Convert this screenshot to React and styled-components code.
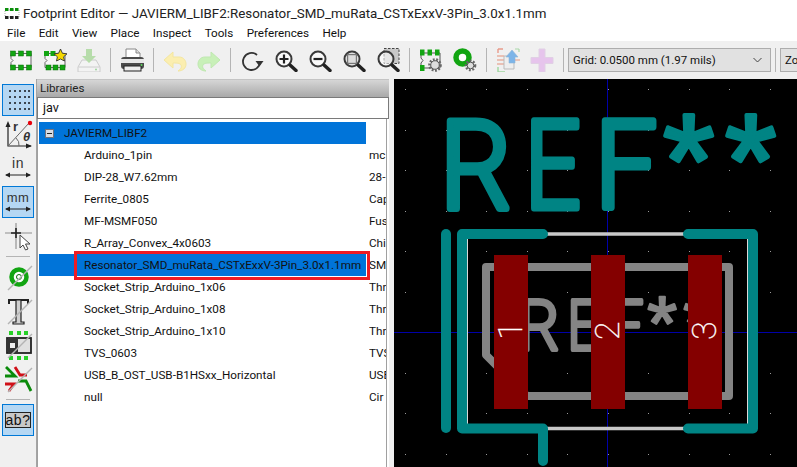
import React from 'react'
import styled, { createGlobalStyle } from 'styled-components'

const Global = createGlobalStyle`
    html, body {
        margin: 0;
        padding: 0;
        background: #fff;
        overflow: hidden;
    }
`
const Window = styled.div`
    width: 797px;
    height: 467px;
    display: flex;
    flex-direction: column;
    overflow: hidden;
    font-family: Roboto, "Noto Sans", sans-serif;
    font-size: 11.7px;
    color: #111;
`
const TitleBar = styled.div`
    height: 24px;
    display: flex;
    align-items: center;
    gap: 3px;
    padding: 2px 0 0 4px;
    box-sizing: border-box;
    font-size: 13.35px;
    color: #222;
    white-space: nowrap;
`
const MenuBar = styled.div`
    height: 17px;
    box-sizing: border-box;
    padding: 1px 0 0 7px;
    display: flex;
    align-items: center;
    gap: 13.4px;
    font-size: 11.7px;
`
const TopToolbar = styled.div`
    height: 38px;
    display: flex;
    align-items: center;
    padding-left: 4px;
    background: #f0f0f0;
    white-space: nowrap;
`
const Slot = styled.div`
    width: 34px;
    height: 26px;
    flex: none;
    display: flex;
    align-items: center;
    justify-content: center;
`
const VSep = styled.div`
    width: 1px;
    height: 24px;
    flex: none;
    margin: 0 4px;
    background: #b4b4b4;
`
const GridSelect = styled.div`
    width: 203px;
    height: 24px;
    flex: none;
    box-sizing: border-box;
    display: flex;
    align-items: center;
    justify-content: space-between;
    padding: 0 8px 0 4px;
    background: #e1e1e1;
    border: 1px solid #adadad;
    font-size: 11.5px;
    overflow: hidden;
`
const Body = styled.div`
    flex: 1;
    display: flex;
    min-height: 0;
`
const SideToolbar = styled.div`
    width: 37px;
    flex: none;
    box-sizing: border-box;
    padding: 5px 0 0 2px;
    display: flex;
    flex-direction: column;
    gap: 2px;
    background: #f0f0f0;
    border-right: 1px solid #a4a4a4;
`
const SideButton = styled.div`
    width: 32px;
    height: 32px;
    box-sizing: border-box;
    display: flex;
    align-items: center;
    justify-content: center;
    background: ${p => (p.$on ? '#b5d7f3' : 'transparent')};
    border: 1px solid ${p => (p.$on ? '#0078d7' : 'transparent')};
`
const HSep = styled.div`
    height: 1px;
    width: 24px;
    margin: 2px 4px 2px;
    background: #b4b4b4;
`
const LibraryPanel = styled.div`
    width: 352px;
    flex: none;
    display: flex;
    flex-direction: column;
`
const PanelHeader = styled.div`
    height: 18px;
    box-sizing: border-box;
    padding: 1px 0 0 3px;
    font-size: 11.6px;
    color: #222;
    background: linear-gradient(#d6d6d6, #a9a9a9);
    border-top: 1px solid #c4c4c4;
`
const FilterInput = styled.div`
    height: 22px;
    box-sizing: border-box;
    padding: 2px 0 0 5px;
    font-size: 12.6px;
    background: #fff;
    border: 1px solid #7a7a7a;
`
const TreeList = styled.div`
    flex: 1;
    box-sizing: border-box;
    margin-right: 2px;
    padding: 3px 0 0 1px;
    background: #fff;
    border-left: 1px solid #a0a0a0;
    border-right: 1px solid #a0a0a0;
`
const TreeRow = styled.div`
    height: 22px;
    display: flex;
    align-items: center;
    position: relative;
    white-space: nowrap;
`
const NameCell = styled.div`
    width: 327px;
    height: 22px;
    flex: none;
    box-sizing: border-box;
    display: flex;
    align-items: center;
    padding-left: ${p => (p.$root ? '6px' : '45px')};
    background: ${p => (p.$blue ? '#0074d9' : 'transparent')};
`
const DescCell = styled.div`
    width: 17px;
    flex: none;
    margin-left: 3px;
    overflow: hidden;
`
const Expander = styled.span`
    width: 9px;
    height: 9px;
    flex: none;
    margin-right: 10px;
    box-sizing: border-box;
    display: flex;
    align-items: center;
    justify-content: center;
    background: #d8dce4;
    border: 1px solid #6d7280;

    &::before {
        content: '';
        width: 5px;
        height: 1px;
        background: #222;
    }
`
const Callout = styled.div`
    position: absolute;
    left: 35px;
    top: -3px;
    width: 296px;
    height: 29px;
    box-sizing: border-box;
    border: 3px solid #ed1c24;
`
const Sash = styled.div`
    width: 5px;
    flex: none;
    background: #f0f0f0;
`
const Canvas = styled.div`
    flex: 1;
    min-width: 0;
    background: #000;
    overflow: hidden;

    svg {
        display: block;
    }
`

const rows = [
    ['Arduino_1pin', 'mc'],
    ['DIP-28_W7.62mm', '28-'],
    ['Ferrite_0805', 'Cap'],
    ['MF-MSMF050', 'Fus'],
    ['R_Array_Convex_4x0603', 'Chi'],
    ['Resonator_SMD_muRata_CSTxExxV-3Pin_3.0x1.1mm', 'SMD', true],
    ['Socket_Strip_Arduino_1x06', 'Thr'],
    ['Socket_Strip_Arduino_1x08', 'Thr'],
    ['Socket_Strip_Arduino_1x10', 'Thr'],
    ['TVS_0603', 'TVS'],
    ['USB_B_OST_USB-B1HSxx_Horizontal', 'USB'],
    ['null', 'Cir'],
]
const menus = ['File', 'Edit', 'View', 'Place', 'Inspect', 'Tools', 'Preferences', 'Help']

const GREEN = '#12a512'
const DARK_GREEN = '#0b6b0b'

// little gear made of a dashed ring
const Gear = ({ x, y, r = 5 }) => (
    <g>
        <circle cx={x} cy={y} r={r} fill="none" stroke="#666" strokeWidth="2.6" strokeDasharray="1.8 1.5" />
        <circle cx={x} cy={y} r={r - 1.2} fill="#ddd" stroke="#555" strokeWidth="1" />
    </g>
)
const Ico = ({ children }) => (
    <svg width="24" height="24" viewBox="0 0 24 24">{children}</svg>
)
const ChipBody = () => (
    <path d="M2 5.5H22V19.5H2V14.5L4 12.5L2 10.5Z" fill="#f6f6f6" stroke="#666" strokeWidth="1" />
)
const ChipIcon = () => (
    <Ico>
        <ChipBody />
        {[1.5, 9.5, 17.5].map(x => <rect key={x} x={x} y="3" width="5" height="5" fill={GREEN} stroke={DARK_GREEN} strokeWidth=".5" />)}
        {[1.5, 9.5, 17.5].map(x => <rect key={x} x={x} y="17" width="5" height="5" fill={GREEN} stroke={DARK_GREEN} strokeWidth=".5" />)}
    </Ico>
)
const ChipStar = () => (
    <Ico>
        <ChipBody />
        {[1, 7.5].map(x => <rect key={x} x={x} y="3" width="5" height="5" fill={GREEN} />)}
        {[3, 10, 17].map(x => <rect key={x} x={x} y="17" width="5" height="5" fill={GREEN} stroke={DARK_GREEN} strokeWidth=".5" />)}
        <path d="M17.5 1L19.4 5.2L24 5.8L20.6 8.8L21.5 13L17.5 11L13.5 13L14.4 8.8L11 5.8L15.6 5.2Z" fill="#f5d800" stroke="#333" strokeWidth=".9" />
    </Ico>
)
const SaveIcon = () => (
    <Ico>
        <path d="M5 12H19L23 19V24H1V19Z" fill="#f3f3f3" stroke="#ccc" />
        <path d="M1.5 19H22.5" stroke="#ccc" />
        <circle cx="19" cy="21.5" r="1" fill="#9ed69e" />
        <path d="M9 1H15V8H19L12 15L5 8H9Z" fill="#b6dcaa" />
    </Ico>
)
const PrinterIcon = () => (
    <Ico>
        <path d="M6 1H16L20 5V10H6Z" fill="#fff" stroke="#888" />
        <path d="M16 1V5H20" fill="#ddd" stroke="#888" />
        <rect x="1" y="9" width="23" height="12" rx="3" fill="#4b4b4b" />
        <rect x="1" y="11" width="23" height="4" fill="#e8e8e8" />
        <rect x="4" y="18" width="17" height="5" fill="#eee" stroke="#222" />
        <circle cx="21.5" cy="17" r="1" fill="#5cd65c" />
    </Ico>
)
const ArrowIcon = ({ fill, edge, flip }) => (
    <Ico>
        <g transform={flip ? 'translate(24 0) scale(-1 1)' : undefined}>
            <path d="M10 4V9H16C21 9 23 13 23 16C23 20 20 23 15 23C18 21 19 19 18 17C17 15.5 15 15 10 15V20L1 12Z" fill={fill} stroke={edge} />
        </g>
    </Ico>
)
const RotateIcon = () => (
    <Ico>
        <path d="M17 7A8.5 8.5 0 1 0 20 13" fill="none" stroke="#333" strokeWidth="1.8" />
        <path d="M15.5 13H23.5L19.5 18.5Z" fill="#333" />
    </Ico>
)
const ZoomGlyph = ({ kind }) => (
    <Ico>
        {kind === 'area' && <rect x="8" y=".5" width="15" height="15" fill="#c8c8c8" stroke="#444" strokeDasharray="2.5 1.5" />}
        <circle cx="10" cy="11" r="7.5" fill={kind === 'area' ? 'rgba(255,255,255,.55)' : '#fafafa'} stroke="#3a3a3a" strokeWidth="2" />
        <path d="M16 17L22 22.5" stroke="#222" strokeWidth="3.4" strokeLinecap="round" />
        {kind === 'in' && <path d="M5.5 11H14.5M10 6.5V15.5" stroke="#222" strokeWidth="2.2" />}
        {kind === 'out' && <path d="M5.5 11H14.5" stroke="#222" strokeWidth="2.2" />}
        {kind === 'fit' && <rect x="5.5" y="6.5" width="9" height="9" fill="#ddd" stroke="#777" strokeWidth="1.4" />}
    </Ico>
)
const ChipGear = () => (
    <Ico>
        <path d="M2 5H21V20H2V15L4 12.5L2 10Z" fill="none" stroke="#555" strokeWidth="1" />
        {[1, 8.5, 16].map(x => <rect key={x} x={x} y="1.5" width="4.5" height="6" fill={GREEN} />)}
        <rect x="1" y="17" width="4.5" height="6" fill={GREEN} />
        <Gear x={16} y={17} r={5.5} />
    </Ico>
)
const ViaGear = () => (
    <Ico>
        <circle cx="9.5" cy="9.5" r="6.5" fill="#fff" stroke={GREEN} strokeWidth="5.5" />
        <Gear x={17.5} y={17.5} r={4.5} />
    </Ico>
)
const ImportIcon = () => (
    <Ico>
        <path d="M1 8H8M1 12H8M1 16H8" stroke="#e8b0a0" strokeWidth="1.4" />
        <path d="M2 1H7M2 1V5" stroke="#e89a8a" strokeWidth="1.4" fill="none" />
        <path d="M2 19V24H9" stroke="#9fd69f" strokeWidth="1.4" fill="none" />
        <path d="M19 1H23M23 1V4" stroke="#aad8aa" strokeWidth="1.2" fill="none" />
        <path d="M19 12H24" stroke="#e8b0a0" strokeWidth="1.4" />
        <path d="M8 8H13L18 12V21H8Z" fill="#eee" stroke="#bbb" />
        <path d="M10 9L16 2L22 9H19V15H13V9Z" fill="#7cb4e8" stroke="#8fb6d6" strokeWidth=".6" />
    </Ico>
)
const PlusIcon = () => (
    <Ico>
        <path d="M9 1H15V9.5H23V15.5H15V24H9V15.5H1V9.5H9Z" fill="#e6c4ec" stroke="#e0d0e4" />
    </Ico>
)
const TitleIcon = () => (
    <svg width="16" height="16" viewBox="0 0 16 16">
        <path d="M1 5H15V12H1Z" fill="#fff" stroke="#777" strokeWidth=".6" strokeDasharray="1 1" />
        {[1, 6, 11].map(x => <rect key={x} x={x} y="3" width="3.5" height="3" fill="#0a8f0a" />)}
        {[1, 6, 11].map(x => <rect key={x} x={x} y="11" width="3.5" height="3" fill="#222" />)}
    </svg>
)
const ChevronDown = () => (
    <svg width="9" height="6" viewBox="0 0 9 6">
        <path d="M.5 1L4.5 5L8.5 1" fill="none" stroke="#444" strokeWidth="1" />
    </svg>
)

// side toolbar drawings, drawn in the 30x30 box of the button
const Side = ({ children }) => <svg width="30" height="30" viewBox="0 0 30 30">{children}</svg>
const Strike = () => <path d="M5 28L29 4" stroke="#b4b4b4" strokeWidth="1.4" />

const SideText = styled.text.attrs(p => ({ x: p.x, y: p.y, fontSize: p.size }))`
    font-family: "Liberation Sans", sans-serif;
    font-weight: ${p => (p.$bold ? 700 : 400)};
    font-style: ${p => (p.$italic ? 'italic' : 'normal')};
    fill: #333;
    letter-spacing: .5px;
`
const DotsIcon = () => (
    <Side>
        {[5, 11, 17, 23].map(y => [6, 11, 16, 21, 25].map(x => (
            <rect key={`${x}-${y}`} x={x} y={y} width="2" height="2" fill="#3c4650" />
        )))}
    </Side>
)
const PolarIcon = () => (
    <Side>
        <path d="M5 5V27H28" fill="none" stroke="#222" strokeWidth="1.2" />
        <path d="M5 2L2.5 8H7.5ZM29 27L23 24.5V29.5Z" fill="#222" />
        <path d="M5 27L26 4" stroke="#666" strokeWidth="1" />
        <path d="M13 19A9 9 0 0 1 16 27" fill="none" stroke="#666" />
        <circle cx="27" cy="4" r="2.2" fill="#e8000b" />
        <SideText x={10} y={12} size={13} $bold>r</SideText>
        <SideText x={20} y={22} size={13} $bold $italic>θ</SideText>
    </Side>
)
const UnitIcon = ({ unit, size }) => (
    <Side>
        <SideText x={15} y={15} size={size} textAnchor="middle">{unit}</SideText>
        <path d="M3 22H27" stroke="#222" strokeWidth="1" />
        <path d="M2 22L7 19.5V24.5ZM28 22L23 19.5V24.5Z" fill="#222" />
    </Side>
)
const CursorIcon = () => (
    <Side>
        <path d="M2 12H29" stroke="#aaa" strokeWidth="1.4" />
        <path d="M13 2V28" stroke="#aaa" strokeWidth="1.6" />
        <path d="M8 12H18M13 7V17" stroke="#222" strokeWidth="1.6" />
        <path d="M17 14V27L20 24L22.5 29L25 28L22.5 23H27Z" fill="#fff" stroke="#444" />
    </Side>
)
const ViaOffIcon = () => (
    <Side>
        <circle cx="16" cy="15" r="7.5" fill="#fff" stroke={GREEN} strokeWidth="4.5" />
        <circle cx="16" cy="15" r="2.5" fill="#fff" stroke={DARK_GREEN} strokeWidth="1" />
        <Strike />
    </Side>
)
const TextOffIcon = () => (
    <Side>
        <path d="M6 8V4H25V8" fill="none" stroke="#222" strokeWidth="2" />
        <path d="M13 4H18V26H21V28H10V26H13Z" fill="#d0d0d0" stroke="#222" strokeWidth="1.2" />
        <Strike />
    </Side>
)
const PadOffIcon = () => (
    <Side>
        {[6, 14, 21].map(x => <rect key={x} x={x} y="1" width="4" height="4" fill="#27d027" />)}
        {[6, 14, 21].map(x => <rect key={x} x={x} y="26" width="4" height="4" fill="#27d027" />)}
        <rect x="4" y="8" width="24" height="15" fill="#e0e0e0" stroke="#222" strokeWidth="1.8" />
        <rect x="5" y="9" width="10" height="13" fill="#333" />
        <rect x="7" y="13" width="5" height="5" fill="#eee" />
        <Strike />
    </Side>
)
const TracksOffIcon = () => (
    <Side>
        <path d="M3 3L12 12H2" fill="none" stroke="#0a8a0a" strokeWidth="2.8" />
        <path d="M12 3L17 11H24" fill="none" stroke="#d01018" strokeWidth="2.8" />
        <path d="M2 20H11L6 27" fill="none" stroke="#d01018" strokeWidth="2.8" />
        <path d="M15 17H23L28 27" fill="none" stroke="#0a8a0a" strokeWidth="2.8" />
        <Strike />
    </Side>
)
const AbBox = styled.div`
    width: 26px;
    height: 16px;
    box-sizing: border-box;
    display: flex;
    align-items: center;
    justify-content: center;
    font-family: "Liberation Sans", sans-serif;
    font-size: 14px;
    letter-spacing: .6px;
    color: #111;
    background: #c8c8c8;
    border: 1px solid #222;
`

const stage = { w: 403, h: 388, ox: 394, oy: 79 }
const GRID = 40.5
const TEAL = '#008484'

// canvas text keeps KiCad's narrow look: light face, squeezed, with a round outline
const RefText = styled.text`
    font-family: Roboto, "Liberation Sans", sans-serif;
    font-weight: 300;
    font-size: 122px;
`
const StarText = styled.text`
    font-family: "Liberation Sans", sans-serif;
    font-size: 132px;
`
const glyphs = [['R', -7, .92], ['E', 78, .8], ['F', 148, .9]]
const RefLabel = ({ x, y, scale = 1, color }) => (
    <g transform={`translate(${x} ${y}) scale(${scale})`} fill={color} stroke={color} strokeWidth="7" strokeLinejoin="round">
        {glyphs.map(([c, dx, sx]) => (
            <RefText key={c} transform={`translate(${dx} -4) scale(${sx} 1)`}>{c}</RefText>
        ))}
        {[216, 278].map(dx => (
            <StarText key={dx} x={dx} y={-6} strokeWidth="4">*</StarText>
        ))}
    </g>
)
const PadNumber = styled.text`
    font-family: Roboto, sans-serif;
    font-weight: 100;
    font-size: 34px;
    fill: #fff;
    stroke: #fff;
    stroke-width: .4px;
`
const pads = [[494, '1'], [591, '2'], [688, '3']]

const Board = () => {
    const dots = []
    for (let i = 0; i < 10; i++) {
        for (let j = 0; j < 10; j++) {
            dots.push(<rect key={`${i}-${j}`} x={Math.round(405 + i * GRID)} y={Math.round(89 + j * GRID)} width="1" height="1" fill="#9a9a9a" />)
        }
    }
    return (
        <svg width={stage.w} height={stage.h} viewBox={`${stage.ox} ${stage.oy} ${stage.w} ${stage.h}`}>
            {dots}
            <path d="M607 79V467M394 332.5H797" stroke="#0000a8" strokeWidth="1" shapeRendering="crispEdges" />
            <RefLabel x={447} y={212} color={TEAL} />
            <RefLabel x={522} y={352} scale={0.58} color="#848484" />
            <path d="M486 355V267H729V396H527Z" fill="none" stroke="#848484" strokeWidth="8" strokeLinejoin="round" />
            <path d="M547 234H684M547 428.5H684" stroke="#c8c8c8" strokeWidth="3.5" />
            <path d="M467.5 239V424M747.5 239V424" stroke="#d8d8d8" strokeWidth="1" />
            <path d="M446 234V428" stroke={TEAL} strokeWidth="10" strokeLinecap="round" />
            <path d="M543 234H462V428.5H543M543 428.5V461" fill="none" stroke={TEAL} strokeWidth="10" strokeLinecap="round" strokeLinejoin="round" />
            <path d="M688 234H753V428.5H688" fill="none" stroke={TEAL} strokeWidth="10" strokeLinecap="round" strokeLinejoin="round" />
            {pads.map(([x, n]) => (
                <g key={n}>
                    <rect x={x} y="255" width="34" height="154" fill="#840000" />
                    <PadNumber transform={`translate(${x + 28} 340) rotate(-90)`}>{n}</PadNumber>
                </g>
            ))}
        </svg>
    )
}

const App = () => (
    <Window>
        <Global />
        <TitleBar>
            <TitleIcon />
            Footprint Editor — JAVIERM_LIBF2:Resonator_SMD_muRata_CSTxExxV-3Pin_3.0x1.1mm
        </TitleBar>
        <MenuBar>
            {menus.map(m => <span key={m}>{m}</span>)}
        </MenuBar>
        <TopToolbar>
            <Slot><ChipIcon /></Slot>
            <Slot><ChipStar /></Slot>
            <Slot><SaveIcon /></Slot>
            <VSep />
            <Slot><PrinterIcon /></Slot>
            <VSep />
            <Slot><ArrowIcon fill="#fbeeb0" edge="#f3e6a0" /></Slot>
            <Slot><ArrowIcon fill="#c8f0b8" edge="#bfe8b0" flip /></Slot>
            <VSep />
            <Slot><RotateIcon /></Slot>
            <Slot><ZoomGlyph kind="in" /></Slot>
            <Slot><ZoomGlyph kind="out" /></Slot>
            <Slot><ZoomGlyph kind="fit" /></Slot>
            <Slot><ZoomGlyph kind="area" /></Slot>
            <VSep />
            <Slot><ChipGear /></Slot>
            <Slot><ViaGear /></Slot>
            <VSep />
            <Slot><ImportIcon /></Slot>
            <Slot><PlusIcon /></Slot>
            <VSep />
            <GridSelect>Grid: 0.0500 mm (1.97 mils)<ChevronDown /></GridSelect>
            <VSep />
            <GridSelect>Zo</GridSelect>
        </TopToolbar>
        <Body>
            <SideToolbar>
                <SideButton $on><DotsIcon /></SideButton>
                <SideButton><PolarIcon /></SideButton>
                <SideButton><UnitIcon unit="in" size={14} /></SideButton>
                <SideButton $on><UnitIcon unit="mm" size={13} /></SideButton>
                <SideButton><CursorIcon /></SideButton>
                <HSep />
                <SideButton><ViaOffIcon /></SideButton>
                <SideButton><TextOffIcon /></SideButton>
                <SideButton><PadOffIcon /></SideButton>
                <SideButton><TracksOffIcon /></SideButton>
                <HSep />
                <SideButton $on><AbBox>ab?</AbBox></SideButton>
            </SideToolbar>
            <LibraryPanel>
                <PanelHeader>Libraries</PanelHeader>
                <FilterInput>jav</FilterInput>
                <TreeList>
                    <TreeRow>
                        <NameCell $root $blue><Expander />JAVIERM_LIBF2</NameCell>
                    </TreeRow>
                    {rows.map(([name, desc, selected]) => (
                        <TreeRow key={name}>
                            <NameCell $blue={selected}>{name}</NameCell>
                            <DescCell>{desc}</DescCell>
                            {selected && <Callout />}
                        </TreeRow>
                    ))}
                </TreeList>
            </LibraryPanel>
            <Sash />
            <Canvas><Board /></Canvas>
        </Body>
    </Window>
)

export default App
